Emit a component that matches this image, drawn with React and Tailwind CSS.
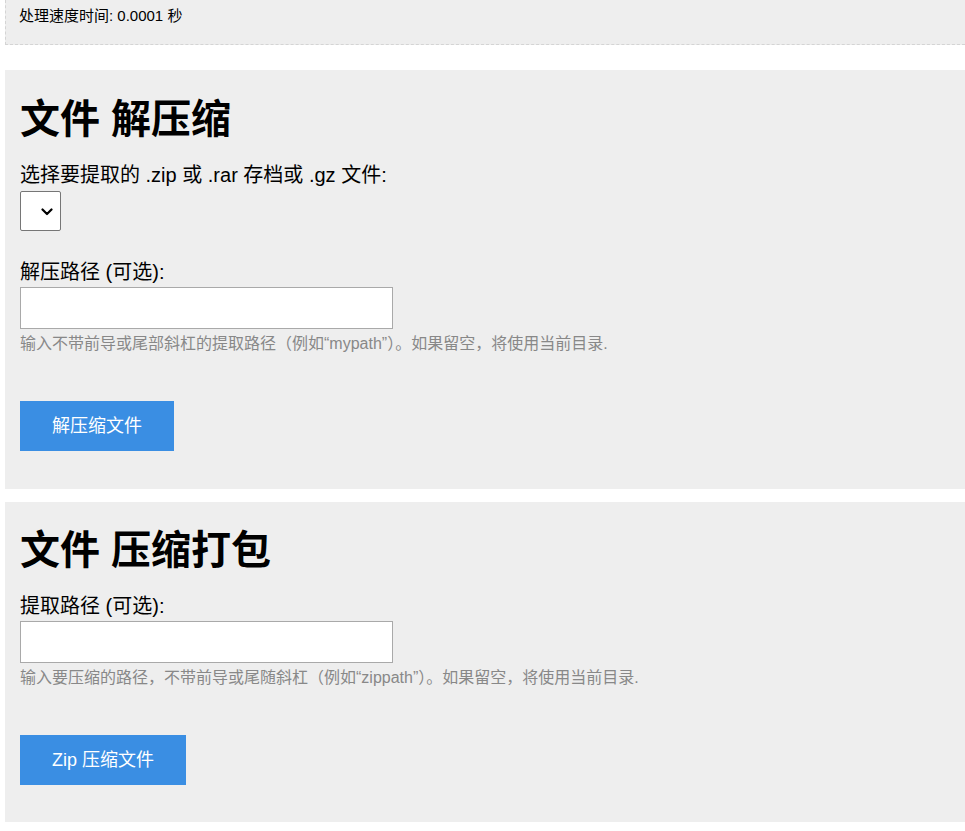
import React from "react";

const font = { fontFamily: '"Liberation Sans", Arial, "Noto Sans CJK SC", sans-serif' };

function Chevron() {
  return (
    <svg width="12" height="8" viewBox="0 0 12 8" className="pointer-events-none absolute right-[8px] top-[17px]">
      <path d="M1.5 1.5 L6 6 L10.5 1.5" fill="none" stroke="#000" strokeWidth="2.2" strokeLinecap="round" strokeLinejoin="round" />
    </svg>
  );
}

export default function App() {
  return (
    <div className="min-h-[831px] bg-white text-black" style={font}>
      <div className="ml-[5px] h-[45px] border-b border-l border-dashed border-[#d4d4d4] bg-[#eeeeee] pl-[13px] pt-[6px] text-[15px] leading-[20px]">
        处理速度时间: 0.0001 秒
      </div>

      <div className="mt-[25px] ml-[5px] bg-[#eeeeee] px-[15px] pt-[25px] pb-[38px]">
        <h1 className="text-[40px] font-bold leading-[48px]">文件 解压缩</h1>
        <div className="mt-[20px] text-[20px] leading-[24px]">选择要提取的 .zip 或 .rar 存档或 .gz 文件:</div>
        <div className="relative mt-[4px] h-[40px] w-[41px]">
          <select className="h-[40px] w-[41px] appearance-none rounded-[2px] border border-[#767676] bg-white"></select>
          <Chevron />
        </div>
        <div className="mt-[29px] text-[20px] leading-[24px]">解压路径 (可选):</div>
        <input type="text" className="mt-[3px] block h-[42px] w-[373px] border border-[#a9a9a9] bg-white outline-none" />
        <div className="mt-[5px] text-[16px] leading-[20px] text-[#888888]">
          输入不带前导或尾部斜杠的提取路径（例如“mypath”）。如果留空，将使用当前目录.
        </div>
        <button className="mt-[47px] block h-[50px] bg-[#3a8ee3] px-[32px] text-[18px] text-white">
          解压缩文件
        </button>
      </div>

      <div className="mt-[13px] ml-[5px] bg-[#eeeeee] px-[15px] pt-[24px] pb-[37px]">
        <h1 className="text-[40px] font-bold leading-[48px]">文件 压缩打包</h1>
        <div className="mt-[20px] text-[20px] leading-[24px]">提取路径 (可选):</div>
        <input type="text" className="mt-[3px] block h-[42px] w-[373px] border border-[#a9a9a9] bg-white outline-none" />
        <div className="mt-[5px] text-[16px] leading-[20px] text-[#888888]">
          输入要压缩的路径，不带前导或尾随斜杠（例如“zippath”）。如果留空，将使用当前目录.
        </div>
        <button className="mt-[47px] block h-[50px] bg-[#3a8ee3] px-[32px] text-[18px] text-white">
          Zip 压缩文件
        </button>
      </div>
    </div>
  );
}
